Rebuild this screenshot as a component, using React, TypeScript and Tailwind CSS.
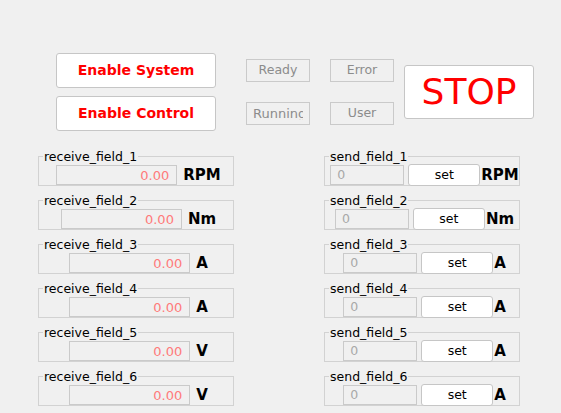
type ReceiveField = { name: string; unit: string };
type SendField = { name: string; unit: string };

const receiveFields: ReceiveField[] = [
  { name: "receive_field_1", unit: "RPM" },
  { name: "receive_field_2", unit: "Nm" },
  { name: "receive_field_3", unit: "A" },
  { name: "receive_field_4", unit: "A" },
  { name: "receive_field_5", unit: "V" },
  { name: "receive_field_6", unit: "V" },
];

const sendFields: SendField[] = [
  { name: "send_field_1", unit: "RPM" },
  { name: "send_field_2", unit: "Nm" },
  { name: "send_field_3", unit: "A" },
  { name: "send_field_4", unit: "A" },
  { name: "send_field_5", unit: "A" },
  { name: "send_field_6", unit: "A" },
];

function StatusLabel({ text, clipped }: { text: string; clipped?: boolean }) {
  if (clipped) {
    return (
      <div className="flex h-[23px] w-[64px] items-center whitespace-nowrap border border-[#cacaca] pl-[6px] text-[13px] leading-none text-[#8c8c8c]">
        <div className="w-[50px] overflow-hidden">{text}</div>
      </div>
    );
  }
  return (
    <div className="flex h-[23px] w-[64px] items-center justify-center overflow-hidden whitespace-nowrap border border-[#cacaca] text-[12.5px] leading-none text-[#8c8c8c]">
      {text}
    </div>
  );
}

function Group({ title, children }: { title: string; children: React.ReactNode }) {
  return (
    <fieldset className="w-[196px] border border-[#d2d2d2]">
      <legend className="ml-[4px] px-[1px] text-[12.5px] leading-[15px] text-black">
        {title}
      </legend>
      <div className="flex h-[21px] items-start justify-center pl-[5px] pt-[1px]">
        {children}
      </div>
    </fieldset>
  );
}

export default function App() {
  return (
    <div className="h-[413px] w-full bg-[#f0f0f0] font-['DejaVu_Sans',sans-serif]">
      <div className="flex pl-[56px] pt-[53px]">
        <div className="flex flex-col gap-[8px]">
          <button className="h-[35px] w-[160px] rounded-[3px] border border-[#c6c6c6] bg-white text-[14px] font-bold text-[#ff0000]">
            Enable System
          </button>
          <button className="h-[35px] w-[160px] rounded-[3px] border border-[#c6c6c6] bg-white text-[14px] font-bold text-[#ff0000]">
            Enable Control
          </button>
        </div>
        <div className="ml-[30px] mt-[6px] grid h-fit grid-cols-[64px_64px] gap-x-[20px] gap-y-[20px]">
          <StatusLabel text="Ready" />
          <StatusLabel text="Error" />
          <StatusLabel text="Running" clipped />
          <StatusLabel text="User" />
        </div>
        <button className="ml-[10px] mt-[12px] h-[54px] w-[130px] rounded-[3px] border border-[#c6c6c6] bg-white text-[36px] leading-none text-[#ff0000]">
          STOP
        </button>
      </div>

      <div className="mt-[18px] grid grid-cols-[196px_196px] gap-x-[90px] gap-y-[7px] pl-[38px]">
        {receiveFields.map((r, i) => {
          const s = sendFields[i];
          return [
            <Group key={r.name} title={r.name}>
              <div className="flex h-[20px] w-[121px] items-center justify-end border border-[#cacaca] bg-[#f0f0f0] pr-[7px] text-[13px] leading-none text-[#ff7a7a]">
                0.00
              </div>
              <span className="ml-[6px] text-[15px] font-bold leading-[20px] text-black">{r.unit}</span>
            </Group>,
            <Group key={s.name} title={s.name}>
              <div className="flex h-[20px] w-[74px] items-center border border-[#cacaca] bg-[#f0f0f0] pl-[6px] text-[12.5px] leading-none text-[#a8a8a8]">
                0
              </div>
              <button className="-mt-px ml-[4px] h-[22px] w-[72px] rounded-[3px] border border-[#c6c6c6] bg-white text-[12.5px] leading-none text-black">
                set
              </button>
              <span className="ml-[1px] text-[15px] font-bold leading-[20px] text-black">{s.unit}</span>
            </Group>,
          ];
        })}
      </div>
    </div>
  );
}
